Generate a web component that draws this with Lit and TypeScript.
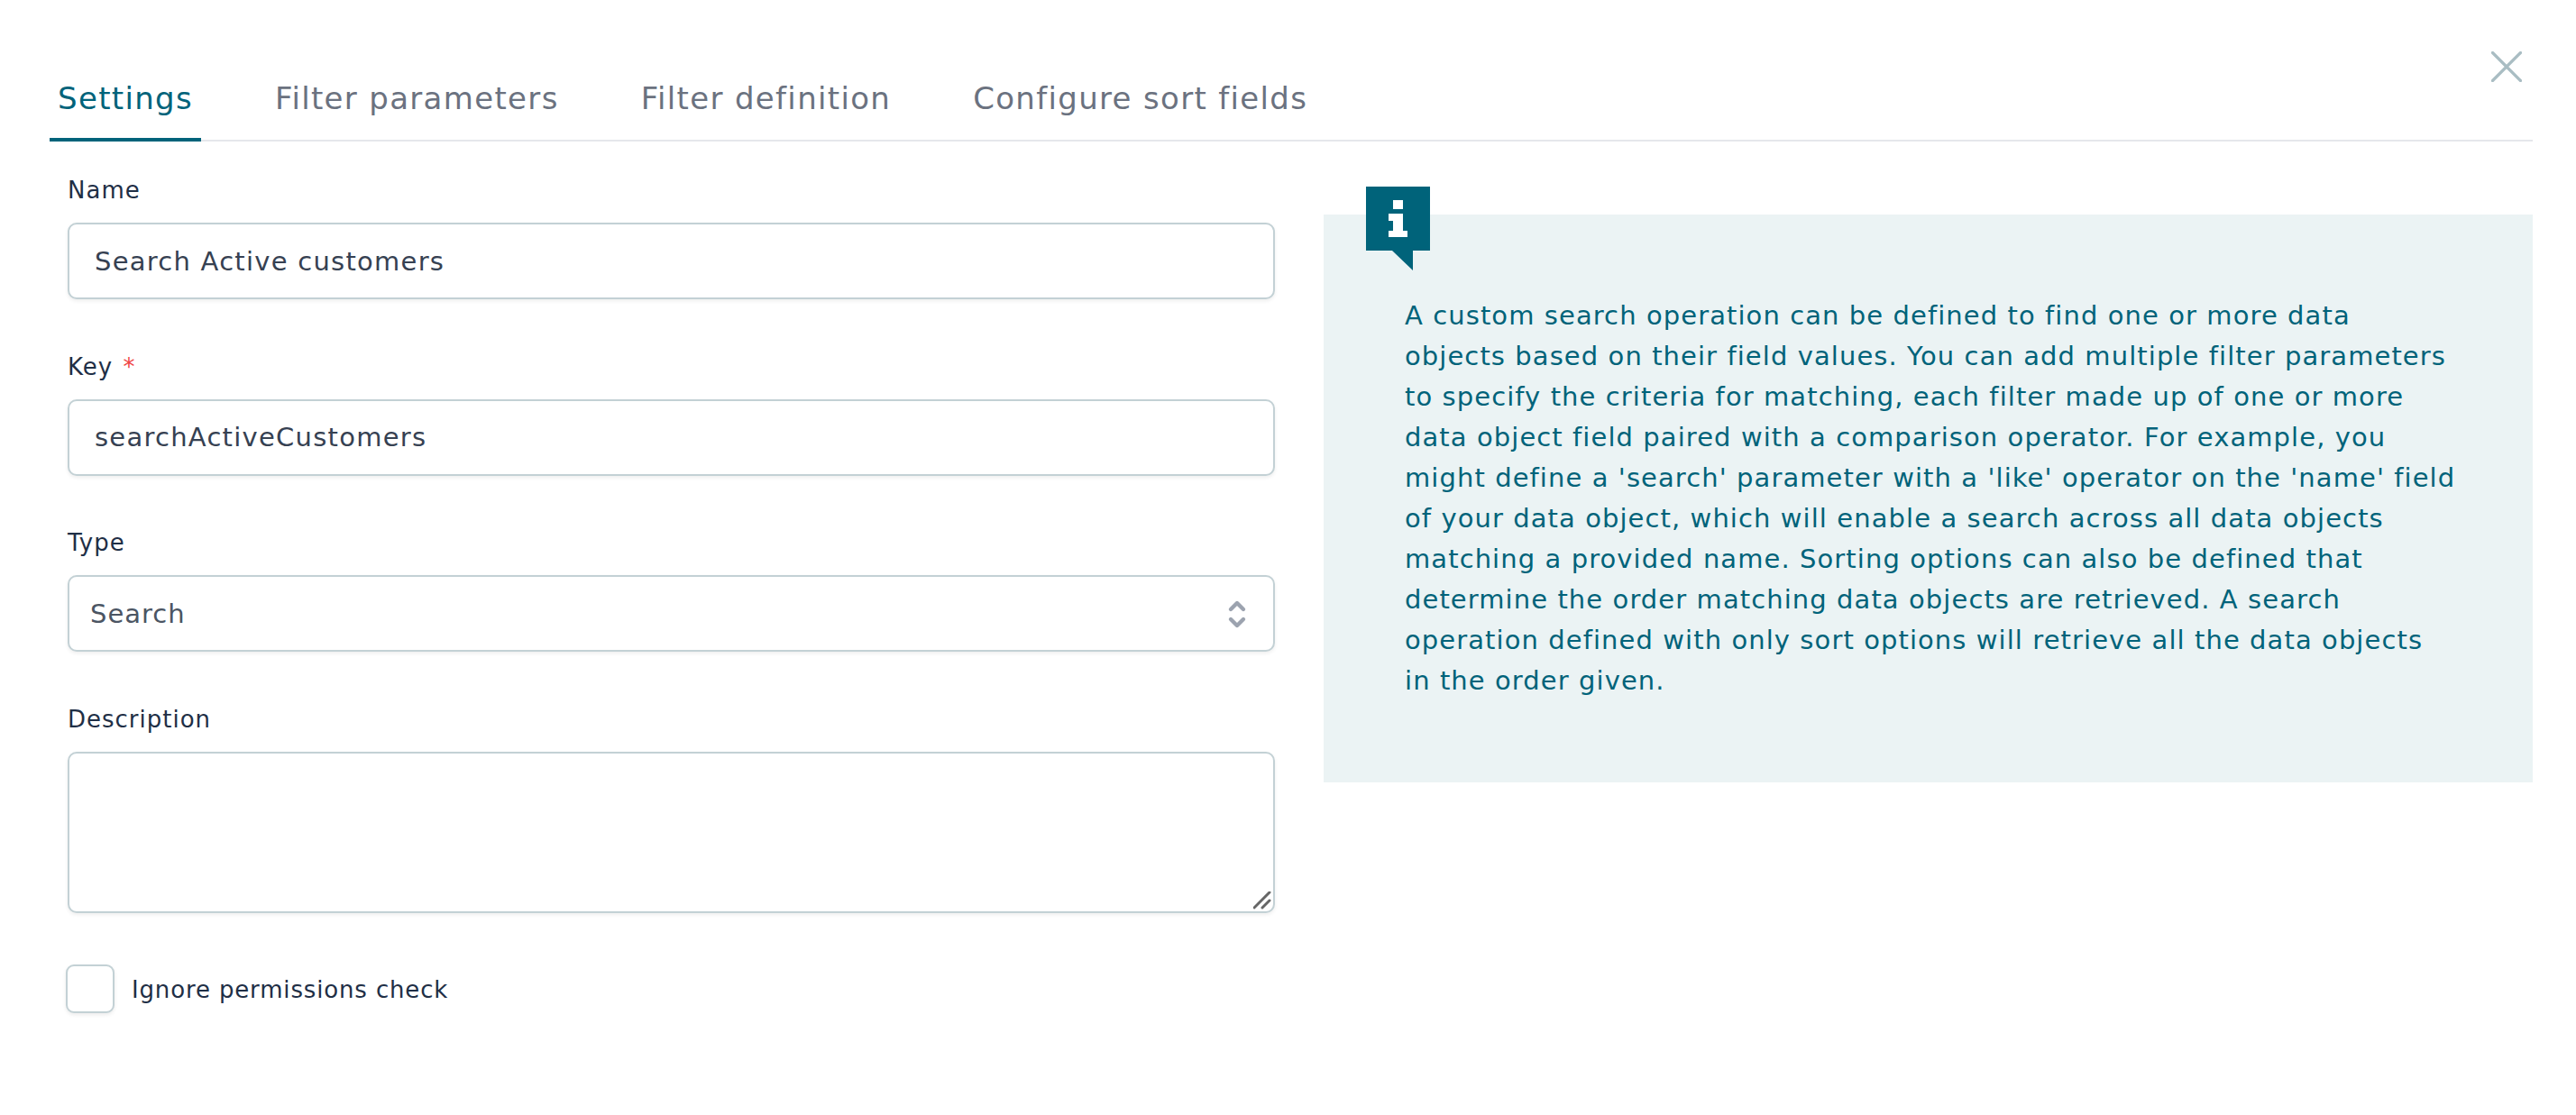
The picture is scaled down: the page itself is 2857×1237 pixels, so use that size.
import { LitElement, html, css } from "lit";
import { customElement } from "lit/decorators.js";

const LINES = [
  "A custom search operation can be defined to find one or more data",
  "objects based on their field values. You can add multiple filter parameters",
  "to specify the criteria for matching, each filter made up of one or more",
  "data object field paired with a comparison operator. For example, you",
  "might define a 'search' parameter with a 'like' operator on the 'name' field",
  "of your data object, which will enable a search across all data objects",
  "matching a provided name. Sorting options can also be defined that",
  "determine the order matching data objects are retrieved. A search",
  "operation defined with only sort options will retrieve all the data objects",
  "in the order given.",
];

@customElement("app-root")
export class AppRoot extends LitElement {
  static styles = css`
    :host {
      display: block;
      position: relative;
      height: 1237px;
      background: #fff;
      font-family: "DejaVu Sans", "Liberation Sans", sans-serif;
      padding: 0 48px 0 55px;
      box-sizing: border-box;
      overflow: hidden;
    }
    .close {
      position: absolute;
      left: 2763px;
      top: 57px;
      width: 34px;
      height: 34px;
      display: block;
    }
    .tabs {
      display: flex;
      gap: 73px;
      height: 157px;
      align-items: flex-end;
      box-sizing: border-box;
      border-bottom: 2px solid #e5e7eb;
    }
    .tab {
      font-size: 34px;
      line-height: 50px;
      letter-spacing: 1.32px;
      padding: 0 9px 19px;
      margin-bottom: -2px;
      color: #6b7280;
      border-bottom: 4px solid transparent;
      white-space: nowrap;
    }
    .tab.active {
      color: #00637a;
      border-bottom-color: #00637a;
    }
    .body {
      display: grid;
      grid-template-columns: 1339px 1341px;
      column-gap: 54px;
      margin-left: 20px;
      align-items: start;
    }
    .form {
      display: flex;
      flex-direction: column;
      gap: 55.67px;
      padding-top: 35px;
    }
    label {
      display: block;
      font-size: 26px;
      line-height: 36px;
      letter-spacing: 1px;
      padding-top: 1px;
      margin-bottom: 18px;
      color: #1f2f46;
    }
    .req {
      color: #ef4444;
      margin-left: 2px;
    }
    .ctl {
      display: block;
      width: 100%;
      box-sizing: border-box;
      height: 85px;
      border: 2px solid #c3d1d5;
      border-radius: 10px;
      background: #fff;
      box-shadow: 0 2px 4px rgba(0, 0, 0, 0.07);
      font: inherit;
      font-size: 29px;
      letter-spacing: 1.25px;
      color: #364152;
      padding: 0 28px;
      outline: none;
      margin: 0;
    }
    select.ctl {
      appearance: none;
      -webkit-appearance: none;
      padding-left: 23px;
      letter-spacing: 1px;
      color: #4b5563;
    }
    textarea.ctl {
      height: 179px;
      resize: none;
      padding-top: 16px;
    }
    .wrap {
      position: relative;
    }
    .chev {
      position: absolute;
      right: 31px;
      top: 26px;
      width: 22px;
      height: 35px;
      pointer-events: none;
    }
    .grip {
      position: absolute;
      right: 4px;
      bottom: 4px;
      width: 20px;
      height: 20px;
      pointer-events: none;
    }
    .check {
      display: flex;
      align-items: center;
      margin-left: -2px;
      margin-top: 1px;
    }
    .box {
      appearance: none;
      -webkit-appearance: none;
      width: 54px;
      height: 54px;
      margin: 0 19px 0 0;
      box-sizing: border-box;
      border: 2px solid #c3d1d5;
      border-radius: 9px;
      background: #fff;
      box-shadow: 0 2px 4px rgba(0, 0, 0, 0.08);
    }
    .check span {
      font-size: 26px;
      line-height: 36px;
      letter-spacing: 0.85px;
      color: #1f2f46;
      white-space: nowrap;
      position: relative;
      top: 1px;
    }
    .info {
      position: relative;
      margin-top: 81px;
      padding: 90px 0 89.5px 90px;
      background: #ebf3f4;
      color: #00637a;
      font-size: 29px;
      line-height: 45px;
      letter-spacing: 1.08px;
    }
    .info div.line {
      white-space: nowrap;
    }
    .badge {
      position: absolute;
      left: 47px;
      top: -31px;
      width: 71px;
      height: 93px;
      display: block;
    }
  `;

  render() {
    return html`
      <svg class="close" viewBox="0 0 34 34" aria-hidden="true">
        <path d="M1.5 1.5L32.5 32.5M32.5 1.5L1.5 32.5" stroke="#a9bdc3" stroke-width="3.2" stroke-linecap="round" fill="none" />
      </svg>
      <div class="tabs">
        <div class="tab active">Settings</div>
        <div class="tab">Filter parameters</div>
        <div class="tab">Filter definition</div>
        <div class="tab">Configure sort fields</div>
      </div>
      <div class="body">
        <div class="form">
          <div>
            <label>Name</label>
            <input class="ctl" type="text" value="Search Active customers" />
          </div>
          <div>
            <label>Key <span class="req">*</span></label>
            <input class="ctl" type="text" value="searchActiveCustomers" />
          </div>
          <div>
            <label>Type</label>
            <div class="wrap">
              <select class="ctl"><option>Search</option></select>
              <svg class="chev" viewBox="0 0 22 35" aria-hidden="true">
                <path d="M4 12L11 5L18 12M4 23L11 30L18 23" stroke="#9ca3af" stroke-width="4.4" fill="none" stroke-linecap="round" stroke-linejoin="round" />
              </svg>
            </div>
          </div>
          <div>
            <label>Description</label>
            <div class="wrap">
              <textarea class="ctl"></textarea>
              <svg class="grip" viewBox="0 0 20 20" aria-hidden="true">
                <path d="M1 18L18 1M10 18L18 10" stroke="#666" stroke-width="3" fill="none" stroke-linecap="round" />
              </svg>
            </div>
          </div>
          <div class="check">
            <input class="box" type="checkbox" />
            <span>Ignore permissions check</span>
          </div>
        </div>
        <div class="info">
          <svg class="badge" viewBox="0 0 71 93" aria-hidden="true">
            <path d="M0 0H71V71H52V93L29 71H0Z" fill="#00637a" />
            <path d="M30 15H41V25H30ZM25 30H41V49H46V56H25V49H30V38H25Z" fill="#fff" />
          </svg>
          ${LINES.map((l) => html`<div class="line">${l}</div>`)}
        </div>
      </div>
    `;
  }
}
